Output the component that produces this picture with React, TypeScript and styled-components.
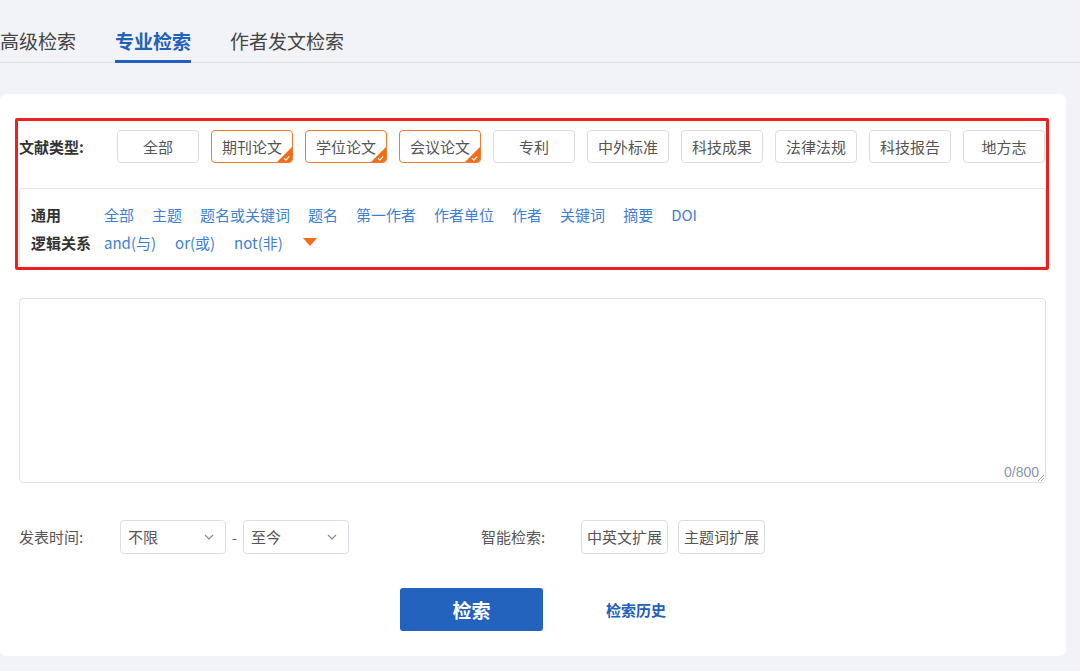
import React from "react";
import styled, { createGlobalStyle } from "styled-components";

const GlobalStyle = createGlobalStyle`
  html, body {
    margin: 0;
    padding: 0;
    background: #f2f3f7;
    font-family: "Noto Sans CJK SC", "Noto Sans", sans-serif;
  }
  * { box-sizing: border-box; }
`;

const docTypes = [
  { name: "全部", checked: false },
  { name: "期刊论文", checked: true },
  { name: "学位论文", checked: true },
  { name: "会议论文", checked: true },
  { name: "专利", checked: false },
  { name: "中外标准", checked: false },
  { name: "科技成果", checked: false },
  { name: "法律法规", checked: false },
  { name: "科技报告", checked: false },
  { name: "地方志", checked: false },
];

const fields = ["全部", "主题", "题名或关键词", "题名", "第一作者", "作者单位", "作者", "关键词", "摘要", "DOI"];
const logics = ["and(与)", "or(或)", "not(非)"];

const Page = styled.div`
  width: 1080px;
  height: 671px;
  overflow: hidden;
  padding-top: 22px;
`;

const Tabs = styled.div`
  display: flex;
  gap: 39px;
  height: 41px;
  border-bottom: 1px solid #e3e4e8;
`;

const Tab = styled.div<{ $active?: boolean }>`
  font-size: 19px;
  line-height: 38px;
  height: 41px;
  color: ${(p) => (p.$active ? "#2160bd" : "#444")};
  font-weight: ${(p) => (p.$active ? 700 : 400)};
  border-bottom: 3px solid ${(p) => (p.$active ? "#2160bd" : "transparent")};
  white-space: nowrap;
`;

const Card = styled.div`
  margin-top: 31px;
  width: 1066px;
  background: #fff;
  border-radius: 6px;
  padding: 24px 20px 25px 19px;
`;

const Highlight = styled.div`
  margin: 0 -3px 0 -4px;
  border: 3px solid #f01e1e;
  border-radius: 2px;
  padding: 9px 0 0 1px;
  height: 152px;
  overflow: hidden;
`;

const TypeRow = styled.div`
  display: flex;
  align-items: center;
`;

const RowLabel = styled.div`
  width: 98px;
  font-size: 15px;
  font-weight: 700;
  color: #333;
`;

const TypeList = styled.div`
  display: flex;
  gap: 12px;
`;

const TypeButton = styled.div<{ $checked?: boolean }>`
  position: relative;
  width: 82px;
  height: 33px;
  border: 1px solid ${(p) => (p.$checked ? "#f7782b" : "#dcdcdc")};
  border-radius: 4px;
  display: flex;
  align-items: center;
  justify-content: center;
  font-size: 15px;
  color: #555;
  overflow: hidden;
`;

const Corner = styled.span`
  position: absolute;
  right: 0;
  bottom: 0;
  width: 16px;
  height: 16px;
  display: block;
`;

const FieldBox = styled.div`
  margin-top: 25px;
  border: 1px solid #e3e3e3;
  border-radius: 3px;
  padding: 11px 11px 20px;
  height: 90px;
`;

const FieldRow = styled.div`
  display: flex;
  align-items: center;
  height: 28px;
`;

const FieldLabel = styled.div`
  width: 73px;
  font-size: 15px;
  font-weight: 700;
  color: #333;
`;

const LinkList = styled.div<{ $gap: number }>`
  display: flex;
  align-items: center;
  gap: ${(p) => p.$gap}px;
`;

const FieldLink = styled.span`
  font-size: 15px;
  color: #3d7fd4;
  white-space: nowrap;
`;

const Caret = styled.span`
  width: 0;
  height: 0;
  margin-left: 1px;
  border-left: 7px solid transparent;
  border-right: 7px solid transparent;
  border-top: 8px solid #f56b16;
`;

const TextBox = styled.div`
  position: relative;
  margin-top: 28px;
  height: 185px;
  border: 1px solid #e2e2e2;
  border-radius: 4px;
`;

const Counter = styled.span`
  position: absolute;
  right: 6px;
  bottom: 2px;
  font-size: 14px;
  color: #8796ad;
  font-family: "Liberation Sans", sans-serif;
`;

const Grip = styled.svg`
  position: absolute;
  right: 0;
  bottom: 0;
`;

const OptionRow = styled.div`
  display: flex;
  align-items: center;
  margin-top: 36px;
  height: 35px;
`;

const OptionLabel = styled.div<{ $w: number }>`
  width: ${(p) => p.$w}px;
  font-size: 15px;
  color: #555;
`;

const Select = styled.div`
  width: 106px;
  height: 34px;
  border: 1px solid #dcdfe6;
  border-radius: 4px;
  display: flex;
  align-items: center;
  justify-content: space-between;
  padding: 0 11px 0 7px;
  font-size: 15px;
  color: #555;
`;

const Dash = styled.span`
  width: 17px;
  text-align: center;
  font-size: 14px;
  color: #555;
`;

const Spacer = styled.div`
  width: 132px;
`;

const ExpandGroup = styled.div`
  display: flex;
  gap: 10px;
`;

const ExpandButton = styled.div`
  height: 34px;
  padding: 0 5px;
  border: 1px solid #dcdcdc;
  border-radius: 4px;
  display: flex;
  align-items: center;
  font-size: 15px;
  color: #555;
`;

const ActionRow = styled.div`
  display: flex;
  align-items: center;
  margin-top: 34px;
  padding-left: 381px;
`;

const SearchButton = styled.button`
  width: 143px;
  height: 43px;
  border: none;
  border-radius: 3px;
  background: #2362bd;
  color: #fff;
  font-size: 19px;
  font-weight: 700;
  font-family: inherit;
`;

const HistoryLink = styled.span`
  margin-left: 63px;
  font-size: 15px;
  font-weight: 700;
  color: #2160bd;
`;

const Chevron = () => (
  <svg width="10" height="6" viewBox="0 0 10 6">
    <path d="M1 1l4 4 4-4" fill="none" stroke="#888" strokeWidth="1.1" />
  </svg>
);

export default function App() {
  return (
    <>
      <GlobalStyle />
      <Page>
        <Tabs>
          <Tab>高级检索</Tab>
          <Tab $active>专业检索</Tab>
          <Tab>作者发文检索</Tab>
        </Tabs>
        <Card>
          <Highlight>
            <TypeRow>
              <RowLabel>文献类型:</RowLabel>
              <TypeList>
                {docTypes.map((t) => (
                  <TypeButton key={t.name} $checked={t.checked}>
                    {t.name}
                    {t.checked && (
                      <Corner>
                        <svg width="16" height="16" viewBox="0 0 16 16">
                          <path d="M16 0V16H0Z" fill="#f56b16" />
                          <path d="M8 11.2l1.9 1.9 3.3-3.7" fill="none" stroke="#fff" strokeWidth="1.2" />
                        </svg>
                      </Corner>
                    )}
                  </TypeButton>
                ))}
              </TypeList>
            </TypeRow>
            <FieldBox>
              <FieldRow>
                <FieldLabel>通用</FieldLabel>
                <LinkList $gap={18}>
                  {fields.map((f) => (
                    <FieldLink key={f}>{f}</FieldLink>
                  ))}
                </LinkList>
              </FieldRow>
              <FieldRow>
                <FieldLabel>逻辑关系</FieldLabel>
                <LinkList $gap={19}>
                  {logics.map((l) => (
                    <FieldLink key={l}>{l}</FieldLink>
                  ))}
                  <Caret />
                </LinkList>
              </FieldRow>
            </FieldBox>
          </Highlight>
          <TextBox>
            <Counter>0/800</Counter>
            <Grip width="8" height="8" viewBox="0 0 8 8">
              <path d="M7 1L1 7M7 4L4 7" stroke="#aaa" strokeWidth="1" />
            </Grip>
          </TextBox>
          <OptionRow>
            <OptionLabel $w={101}>发表时间:</OptionLabel>
            <Select>
              不限
              <Chevron />
            </Select>
            <Dash>-</Dash>
            <Select>
              至今
              <Chevron />
            </Select>
            <Spacer />
            <OptionLabel $w={100}>智能检索:</OptionLabel>
            <ExpandGroup>
              <ExpandButton>中英文扩展</ExpandButton>
              <ExpandButton>主题词扩展</ExpandButton>
            </ExpandGroup>
          </OptionRow>
          <ActionRow>
            <SearchButton>检索</SearchButton>
            <HistoryLink>检索历史</HistoryLink>
          </ActionRow>
        </Card>
      </Page>
    </>
  );
}
